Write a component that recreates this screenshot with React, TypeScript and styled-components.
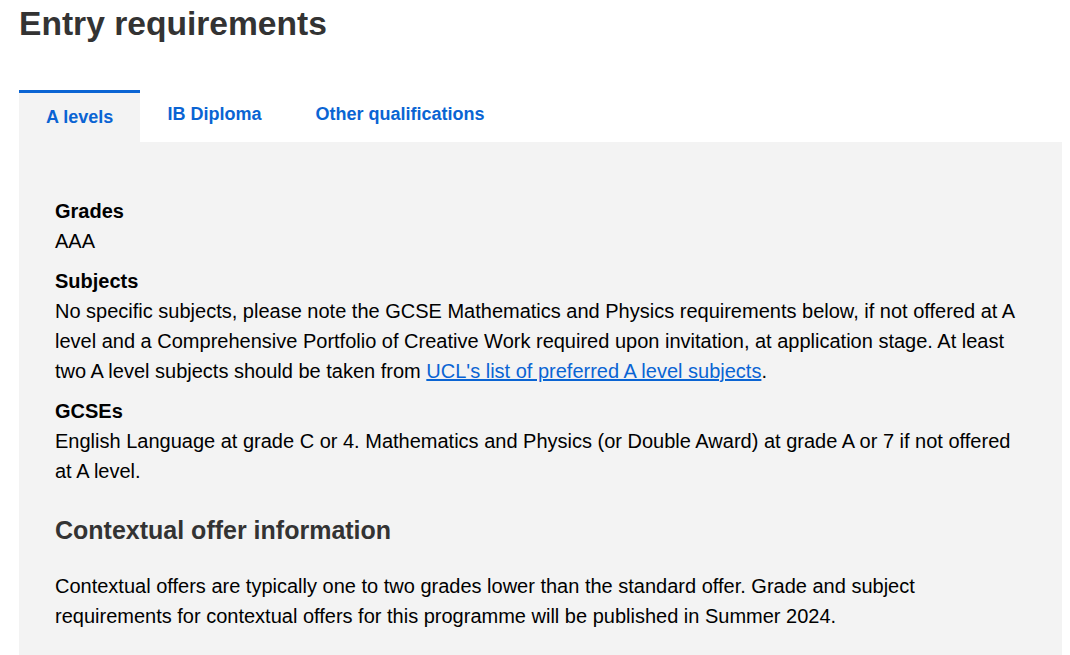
import React, { useState } from "react";
import styled, { createGlobalStyle } from "styled-components";

const GlobalStyle = createGlobalStyle`
  html, body {
    margin: 0;
    padding: 0;
    background: #fff;
  }
  body {
    font-family: "Liberation Sans", Arial, sans-serif;
    color: #000;
  }
`;

const Page = styled.div`
  width: 1043px;
  padding: 4px 0 0 19px;
`;

const Title = styled.h1`
  margin: 0 0 46px;
  font-size: 33.6px;
  line-height: 40px;
  font-weight: 700;
  color: #333;
`;

const TabList = styled.div`
  display: flex;
  align-items: flex-start;
`;

const Tab = styled.button<{ $active?: boolean }>`
  display: block;
  border: 0;
  border-top: 3px solid ${(p) => (p.$active ? "#0a64d3" : "transparent")};
  background: ${(p) => (p.$active ? "#f3f3f3" : "transparent")};
  padding: ${(p) => (p.$active ? "14px 27px 15px" : "11px 27px 18px")};
  margin: 0;
  font-family: inherit;
  font-size: 18px;
  line-height: 20px;
  font-weight: 700;
  color: #0a64d3;
  cursor: pointer;
`;

const Panel = styled.div`
  background: #f3f3f3;
  padding: 54px 36px 24px 36px;
`;

const Label = styled.h3<{ $first?: boolean }>`
  margin: ${(p) => (p.$first ? "0" : "10px")} 0 0;
  font-size: 20px;
  line-height: 30px;
  font-weight: 700;
`;

const Text = styled.p`
  margin: 0;
  font-size: 20px;
  line-height: 30px;
`;

const Link = styled.a`
  color: #0a64d3;
  text-decoration: underline;
`;

const SubHeading = styled.h2`
  margin: 29px 0 26px;
  font-size: 25px;
  line-height: 30px;
  font-weight: 700;
  color: #333;
`;

const tabs = ["A levels", "IB Diploma", "Other qualifications"];

export default function App() {
  const [active, setActive] = useState(0);
  return (
    <Page>
      <GlobalStyle />
      <Title>Entry requirements</Title>
      <TabList>
        {tabs.map((t, i) => (
          <Tab key={t} $active={i === active} onClick={() => setActive(i)}>
            {t}
          </Tab>
        ))}
      </TabList>
      <Panel>
        <Label $first>Grades</Label>
        <Text>AAA</Text>
        <Label>Subjects</Label>
        <Text>
          No specific subjects, please note the GCSE Mathematics and Physics
          requirements below, if not offered at A level and a Comprehensive
          Portfolio of Creative Work required upon invitation, at application
          stage. At least two A level subjects should be taken from{" "}
          <Link href="#">UCL's list of preferred A level subjects</Link>.
        </Text>
        <Label>GCSEs</Label>
        <Text>
          English Language at grade C or 4. Mathematics and Physics (or Double
          Award) at grade A or 7 if not offered at A level.
        </Text>
        <SubHeading>Contextual offer information</SubHeading>
        <Text>
          Contextual offers are typically one to two grades lower than the
          standard offer. Grade and subject requirements for contextual offers
          for this programme will be published in Summer 2024.
        </Text>
      </Panel>
    </Page>
  );
}
